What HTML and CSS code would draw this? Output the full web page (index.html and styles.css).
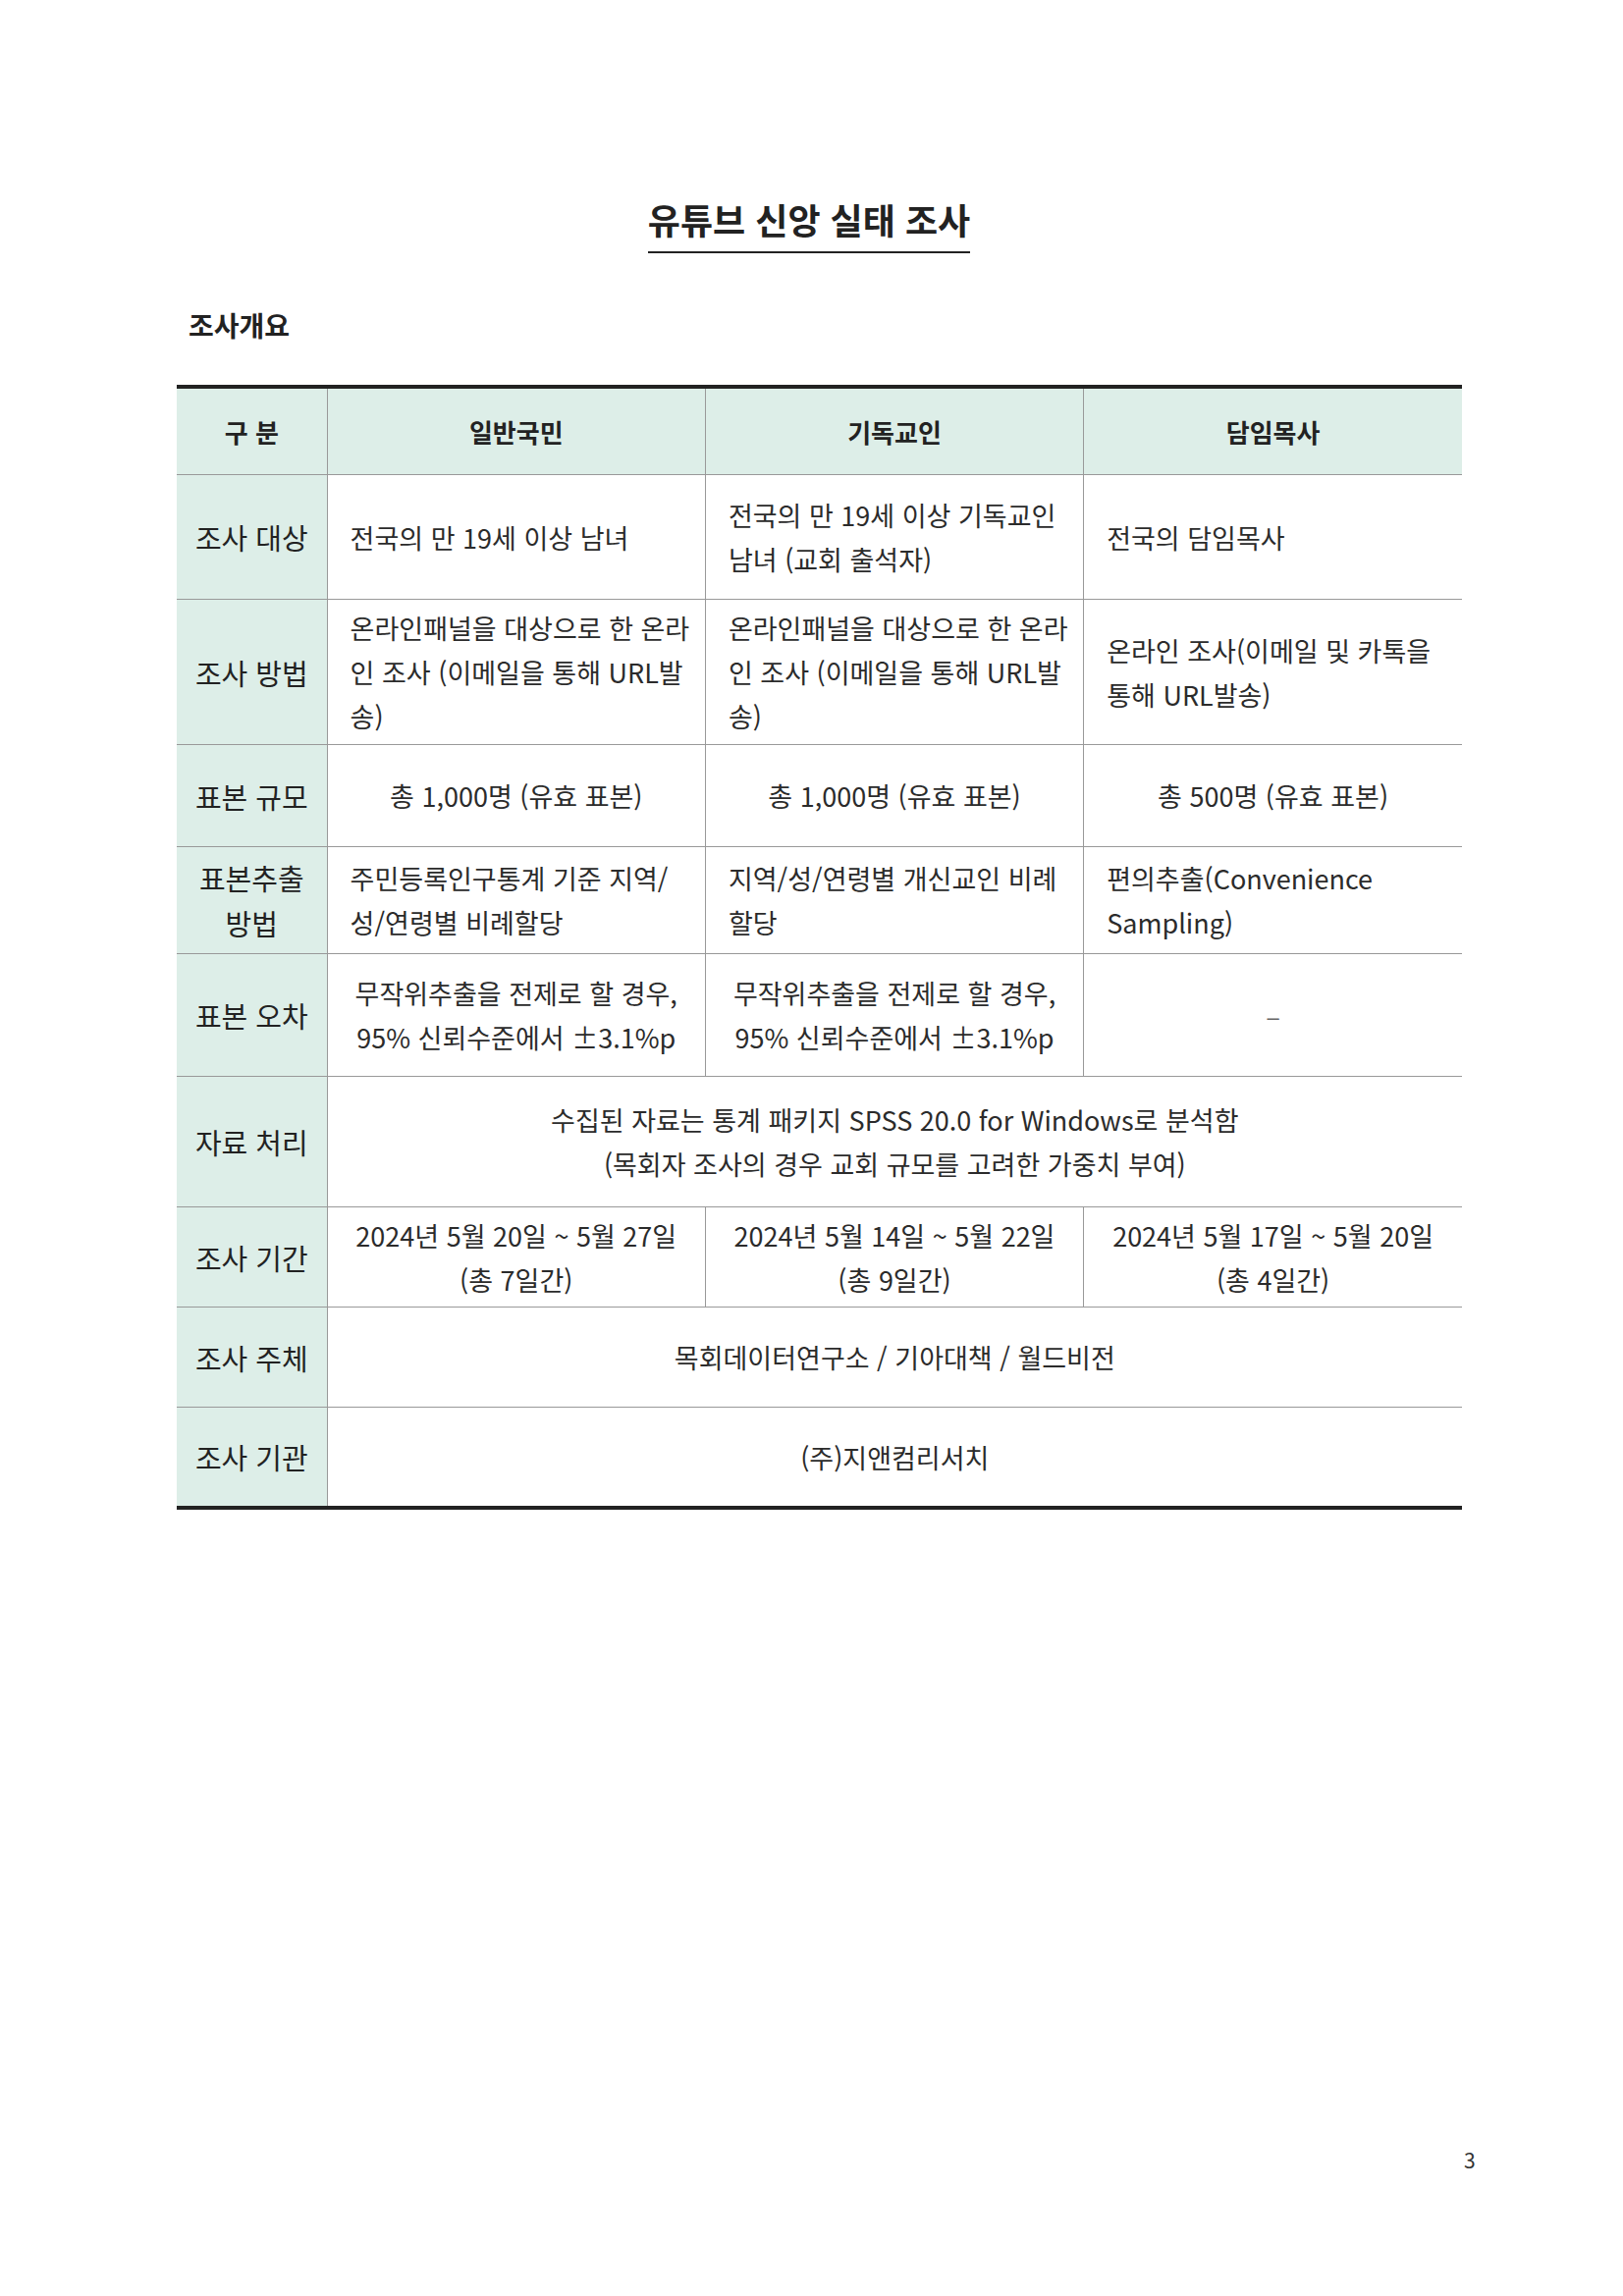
FILE: index.html
```html
<!DOCTYPE html>
<html lang="ko">
<head>
<meta charset="utf-8">
<title>유튜브 신앙 실태 조사</title>
<link rel="stylesheet" href="styles.css">
</head>
<body>
<div class="page">
  <div class="title-wrap"><h1 class="title">유튜브 신앙 실태 조사</h1></div>
  <h2 class="section">조사개요</h2>
  <table class="survey">
    <colgroup>
      <col class="c-label"><col class="c-data"><col class="c-data"><col class="c-data">
    </colgroup>
    <thead>
      <tr class="r-head">
        <th>구 분</th><th>일반국민</th><th>기독교인</th><th>담임목사</th>
      </tr>
    </thead>
    <tbody>
      <tr class="r1">
        <th>조사 대상</th>
        <td>전국의 만 19세 이상 남녀</td>
        <td>전국의 만 19세 이상 기독교인<br>남녀 (교회 출석자)</td>
        <td>전국의 담임목사</td>
      </tr>
      <tr class="r2">
        <th>조사 방법</th>
        <td>온라인패널을 대상으로 한 온라<br>인 조사 (이메일을 통해 URL발<br>송)</td>
        <td>온라인패널을 대상으로 한 온라<br>인 조사 (이메일을 통해 URL발<br>송)</td>
        <td>온라인 조사(이메일 및 카톡을<br>통해 URL발송)</td>
      </tr>
      <tr class="r3">
        <th>표본 규모</th>
        <td class="center">총 1,000명 (유효 표본)</td>
        <td class="center">총 1,000명 (유효 표본)</td>
        <td class="center">총 500명 (유효 표본)</td>
      </tr>
      <tr class="r4">
        <th>표본추출<br>방법</th>
        <td>주민등록인구통계 기준 지역/<br>성/연령별 비례할당</td>
        <td>지역/성/연령별 개신교인 비례<br>할당</td>
        <td>편의추출(Convenience<br>Sampling)</td>
      </tr>
      <tr class="r5">
        <th>표본 오차</th>
        <td class="center">무작위추출을 전제로 할 경우,<br>95% 신뢰수준에서 ±3.1%p</td>
        <td class="center">무작위추출을 전제로 할 경우,<br>95% 신뢰수준에서 ±3.1%p</td>
        <td class="center"><span class="dash">–</span></td>
      </tr>
      <tr class="r6">
        <th>자료 처리</th>
        <td class="center" colspan="3">수집된 자료는 통계 패키지 SPSS 20.0 for Windows로 분석함<br>(목회자 조사의 경우 교회 규모를 고려한 가중치 부여)</td>
      </tr>
      <tr class="r7">
        <th>조사 기간</th>
        <td class="center">2024년 5월 20일 ~ 5월 27일<br>(총 7일간)</td>
        <td class="center">2024년 5월 14일 ~ 5월 22일<br>(총 9일간)</td>
        <td class="center">2024년 5월 17일 ~ 5월 20일<br>(총 4일간)</td>
      </tr>
      <tr class="r8">
        <th>조사 주체</th>
        <td class="center" colspan="3">목회데이터연구소 / 기아대책 / 월드비전</td>
      </tr>
      <tr class="r9">
        <th>조사 기관</th>
        <td class="center" colspan="3">(주)지앤컴리서치</td>
      </tr>
    </tbody>
  </table>
  <div class="page-num">3</div>
</div>
</body>
</html>
```
FILE: styles.css
```css
html, body {
  margin: 0;
  padding: 0;
  background: #ffffff;
}
body {
  font-family: "Noto Sans CJK KR", "Noto Sans", sans-serif;
  color: #2a2a2a;
}
.page {
  width: 1653px;
  height: 2339px;
  box-sizing: border-box;
  padding: 201px 0 0 180px;
  position: relative;
}
.title-wrap {
  width: 1288px;
  display: flex;
  justify-content: center;
}
.title {
  margin: 0;
  font-size: 36px;
  line-height: 44px;
  font-weight: 700;
  color: #222;
  padding-bottom: 11px;
  border-bottom: 2px solid #222;
}
.section {
  margin: 55px 0 0 12px;
  font-size: 28px;
  line-height: 36px;
  font-weight: 700;
  color: #222;
}
.survey {
  margin-top: 43px;
  width: 1309px;
  border-collapse: collapse;
  table-layout: fixed;
  border-top: 4px solid #222;
  border-bottom: 4px solid #222;
  font-size: 27px;
  line-height: 45px;
  color: #2b2b2b;
}
.c-label { width: 153px; }
.c-data { width: 385px; }
.survey th,
.survey td {
  border: 1px solid #999;
  padding: 0 0 0 23px;
  vertical-align: middle;
  text-align: left;
  white-space: nowrap;
}
.survey tr > :first-child { border-left: none; }
.survey tr > :last-child { border-right: none; }
.survey thead th {
  background: #ddeee8;
  font-weight: 700;
  font-size: 26px;
  color: #222;
  text-align: center;
  padding: 0;
}
.survey tbody th {
  background: #ddeee8;
  font-weight: 400;
  font-size: 29px;
  line-height: 46px;
  text-align: center;
  padding: 0;
  color: #222;
}
.survey td.center {
  text-align: center;
  padding: 0;
}
.dash {
  font-family: "Liberation Sans", sans-serif;
  font-size: 22px;
  color: #666;
}
.r-head > * { height: 87px; }
.r1 > * { height: 126px; }
.r2 > * { height: 147px; }
.r3 > * { height: 103px; }
.r4 > * { height: 108px; }
.r5 > * { height: 124px; }
.r6 > * { height: 132px; }
.r7 > * { height: 101px; }
.r8 > * { height: 101px; }
.r9 > * { height: 100px; }
.page-num {
  position: absolute;
  left: 1491px;
  top: 2186px;
  font-size: 21px;
  line-height: 28px;
  color: #333;
}
```
